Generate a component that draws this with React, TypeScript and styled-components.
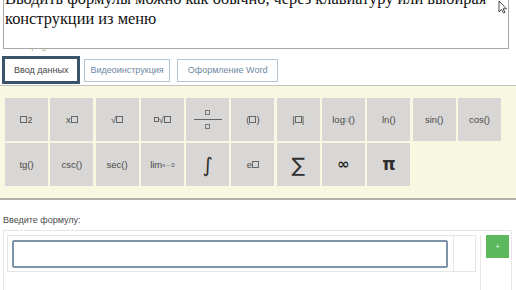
import React from 'react';
import styled, { createGlobalStyle } from 'styled-components';

const GlobalStyle = createGlobalStyle`
  body {
    margin: 0;
    background: #ffffff;
    font-family: 'Liberation Sans', Arial, sans-serif;
    overflow: hidden;
  }
`;

const Page = styled.div`
  position: relative;
  width: 516px;
  height: 290px;
  overflow: hidden;
`;

const Tooltip = styled.div`
  position: absolute;
  left: 3px;
  top: -14px;
  width: 506px;
  height: 63px;
  box-sizing: border-box;
  padding: 2px 4px 0 1px;
  background: #ffffff;
  border: 1px solid #a8a8a8;
  font-family: 'Liberation Serif', 'Times New Roman', serif;
  font-size: 16.4px;
  line-height: 20px;
  color: #111;
  white-space: nowrap;
  z-index: 2;
`;

const Cursor = styled.svg`
  position: absolute;
  right: 8px;
  top: 0;
  z-index: 3;
`;

const Hint = styled.div`
  padding: 41px 0 0 5px;
  font-size: 9px;
  line-height: 10px;
  color: #8a8a8a;
  span {
    color: #8cb26a;
  }
`;

const Tabs = styled.div`
  display: flex;
  align-items: center;
  margin-top: 5px;
  padding-left: 2px;
  height: 28px;
`;

const Tab = styled.div<{ $active?: boolean; $pad: number; $gap: number }>`
  box-sizing: border-box;
  height: ${(p) => (p.$active ? '28px' : '23px')};
  padding: 0 ${(p) => p.$pad}px;
  margin-right: ${(p) => p.$gap}px;
  display: flex;
  align-items: center;
  border: ${(p) => (p.$active ? '3px solid #3c546b' : '1px solid #b3c4d2')};
  background: #fff;
  color: ${(p) => (p.$active ? '#454545' : '#6d88a3')};
  font-size: 9px;
`;

const Panel = styled.div`
  margin-top: 1px;
  border-top: 1px solid #c6c6c0;
  border-bottom: 2px solid #b3b3ad;
  background: #f8f8e2;
  padding: 12px 0 12px 5px;
  display: grid;
  grid-template-columns: repeat(11, 43px);
  grid-auto-rows: 43px;
  column-gap: 2.3px;
  row-gap: 2px;
`;

const Key = styled.div`
  background: #d9d7d5;
  display: flex;
  align-items: center;
  justify-content: center;
  color: #4a4a4a;
  font-size: 9.5px;
  white-space: nowrap;
`;

const Box = styled.span`
  display: inline-block;
  width: 7px;
  height: 7px;
  border: 1px solid #666;
  box-sizing: border-box;
`;

const Sup = styled.span`
  font-size: 7px;
  vertical-align: 4px;
`;

const Sub = styled.span`
  font-size: 6px;
  vertical-align: -2px;
`;

const Fraction = styled.div`
  display: flex;
  flex-direction: column;
  align-items: center;
  gap: 4px;
  width: 28px;
  ${Box} {
    width: 5px;
    height: 5px;
    border-color: #777;
  }
`;

const Bar = styled.div`
  width: 28px;
  height: 1px;
  background: #666;
`;

const Glyph = styled.span<{ $size: number; $bold?: boolean }>`
  font-family: 'DejaVu Sans', 'Liberation Sans', sans-serif;
  font-size: ${(p) => p.$size}px;
  font-weight: ${(p) => (p.$bold ? 700 : 400)};
  color: #2f2f2f;
  line-height: 1;
`;

const Label = styled.div`
  margin: 15px 0 4px 3px;
  font-size: 9px;
  line-height: 11px;
  color: #4a4a4a;
`;

const FormBox = styled.div`
  margin-left: 3px;
  width: 509px;
  height: 70px;
  box-sizing: border-box;
  border: 1px solid #e6e6e6;
  display: flex;
  padding: 4px 0 0 3px;
`;

const InputCell = styled.div`
  width: 469px;
  height: 37px;
  box-sizing: border-box;
  border: 1px solid #e6e6e6;
  display: flex;
`;

const InputWrap = styled.div`
  width: 446px;
  border-right: 1px solid #e6e6e6;
  padding: 4px 0 0 4px;
  box-sizing: border-box;
`;

const Input = styled.div`
  width: 436px;
  height: 28px;
  box-sizing: border-box;
  border: 2px solid #7c93a9;
  border-radius: 2px;
  background: #fff;
`;

const Side = styled.div`
  margin-left: 4px;
  border-left: 1px solid #e6e6e6;
  padding-left: 5px;
`;

const AddButton = styled.div`
  width: 23px;
  height: 23px;
  background: #5cb85c;
  color: #e8f6e8;
  font-size: 8px;
  display: flex;
  align-items: center;
  justify-content: center;
`;

const keys: React.ReactNode[] = [
  <><Box /><Sup style={{ fontSize: 9 }}>2</Sup></>,
  <>x<Sup><Box /></Sup></>,
  <>√<Box /></>,
  <><Sup><Box style={{ width: 5, height: 5 }} /></Sup> √<Box /></>,
  <Fraction><Box /><Bar /><Box /></Fraction>,
  <>(<Box />)</>,
  <>|<Box />|</>,
  <>log<Sub>□</Sub>()</>,
  'ln()',
  'sin()',
  'cos()',
  'tg()',
  'csc()',
  'sec()',
  <>lim<Sub>x→0</Sub></>,
  <Glyph $size={20}>∫</Glyph>,
  <>e <Sup><Box /></Sup></>,
  <Glyph $size={20}>∑</Glyph>,
  <Glyph $size={15} $bold>∞</Glyph>,
  <Glyph $size={17} $bold>π</Glyph>,
];

const App = () => (
  <Page>
    <GlobalStyle />
    <Tooltip>
      Вводить формулы можно как обычно, через клавиатуру или выбирая
      <br />
      конструкции из меню
    </Tooltip>
    <Cursor width="10" height="14" viewBox="0 0 10 14">
      <path d="M1 1 L1 12 L3.5 9.5 L5.5 13 L7 12.3 L5 8.8 L8.5 8.8 Z" fill="#fff" stroke="#333" strokeWidth="0.9" />
    </Cursor>
    <Hint>
      Тема: <span>png</span> · <span>latex</span>
    </Hint>
    <Tabs>
      <Tab $active $pad={9} $gap={4}>Ввод данных</Tab>
      <Tab $pad={5} $gap={7}>Видеоинструкция</Tab>
      <Tab $pad={10} $gap={0}>Оформление Word</Tab>
    </Tabs>
    <Panel>
      {keys.map((k, i) => (
        <Key key={i}>{k}</Key>
      ))}
    </Panel>
    <Label>Введите формулу:</Label>
    <FormBox>
      <InputCell>
        <InputWrap>
          <Input />
        </InputWrap>
      </InputCell>
      <Side>
        <AddButton>+</AddButton>
      </Side>
    </FormBox>
  </Page>
);

export default App;
